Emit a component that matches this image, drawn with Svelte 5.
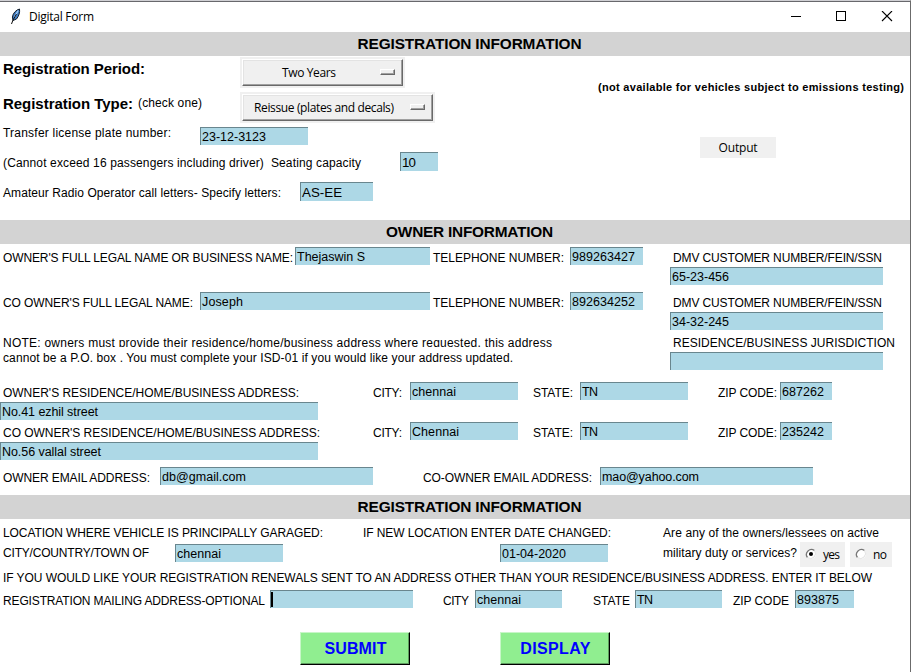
<script>
  // Spreads letters so that a text run occupies the given width in pixels,
  // leaving one pixel for the side bearing of the last letter.
  function track(node, width) {
    if (!width) return;
    const natural = node.getBoundingClientRect().width;
    const gaps = node.textContent.length - 1;
    node.style.letterSpacing = `${(width - 1 - natural) / gaps}px`;
  }
</script>

{#snippet label(text, width)}
  <div class="label"><span use:track={width}>{text}</span></div>
{/snippet}

{#snippet entry(text, width)}
  <div class="entry"><span use:track={width}>{text}</span></div>
{/snippet}

{#snippet banner(text, width)}
  <h2><span use:track={width}>{text}</span></h2>
{/snippet}

{#snippet radio(text, width, checked)}
  <div class="radio">
    <svg width="12" height="12" viewBox="0 0 12 12">
      <circle cx="6" cy="6" r="5" fill="#fff" />
      <path d="M2.5 9.5A5 5 0 0 1 9.5 2.5" fill="none" stroke="#777" stroke-width="1.3" />
      <path d="M9.5 2.5A5 5 0 0 1 2.5 9.5" fill="none" stroke="#e3e3e3" stroke-width="1" />
      {#if checked}<circle cx="6" cy="6" r="2" fill="#000" />{/if}
    </svg>
    <span use:track={width}>{text}</span>
  </div>
{/snippet}

<div class="window">
  <header>
    <svg class="feather" width="12" height="17" viewBox="0 0 12 17">
      <path d="M9.5 1C6 2 3 5 2.4 9L3 12.5L6.5 11C9 8 10 4 9.5 1Z" fill="#3f7cc4" stroke="#14202e" stroke-width="1" />
      <path d="M8.2 2.5L4.5 9" stroke="#a9d0f4" stroke-width="1.2" />
      <path d="M6.5 6L3 12L1.5 16" fill="none" stroke="#111" stroke-width="1" />
    </svg>
    <span class="title"><span use:track={66}>Digital Form</span></span>
    <svg class="controls" width="104" height="12" viewBox="0 0 104 12" fill="none" stroke="#000">
      <path d="M0 5.5H10" />
      <rect x="45.5" y="0.5" width="9" height="9" />
      <path d="M91 0L101 10M101 0L91 10" stroke-width="1.1" />
    </svg>
  </header>

  {@render banner('REGISTRATION INFORMATION', 225)}
  <section class="vehicle">
    <div class="vehicle-main">
      <div class="row period">
        <div class="strong"><span use:track={143}>Registration Period:</span></div>
        <div class="menu short"><div class="face"><span use:track={55}>Two Years</span><i></i></div></div>
      </div>
      <div class="row type">
        <div class="strong"><span use:track={131}>Registration Type:</span></div>
        {@render label('(check one)', 65)}
        <div class="menu long"><div class="face"><span use:track={141}>Reissue (plates and decals)</span><i></i></div></div>
      </div>
      <div class="row plate">
        {@render label('Transfer license plate number:', 169)}
        {@render entry('23-12-3123', 65)}
      </div>
      <div class="row seats">
        {@render label('(Cannot exceed 16 passengers including driver)\u00a0 Seating capacity', 359)}
        {@render entry('10', 15)}
      </div>
      <div class="row radio-op">
        {@render label('Amateur Radio Operator call letters- Specify letters:', 279)}
        {@render entry('AS-EE', 41)}
      </div>
    </div>
    <div class="vehicle-side">
      <p><span use:track={307}>(not available for vehicles subject to emissions testing)</span></p>
      <div class="output"><span use:track={40}>Output</span></div>
    </div>
  </section>

  {@render banner('OWNER INFORMATION', 168)}
  <section class="owners">
    <div class="owners-main">
      <div class="row owner">
        {@render label("OWNER'S FULL LEGAL NAME OR BUSINESS NAME:", 291)}
        {@render entry('Thejaswin S', 69)}
        {@render label('TELEPHONE NUMBER:', 132)}
        {@render entry('989263427', 64)}
      </div>
      <div class="row co-owner">
        {@render label("CO OWNER'S FULL LEGAL NAME:", 191)}
        {@render entry('Joseph', 42)}
        {@render label('TELEPHONE NUMBER:', 132)}
        {@render entry('892634252', 64)}
      </div>
      <div class="note">{@render label('NOTE: owners must provide their residence/home/business address where requested, this address', 550)}</div>
      <div class="note over">{@render label('cannot be a P.O. box . You must complete your ISD-01 if you would like your address updated.', 511)}</div>
    </div>
    <div class="owners-side">
      {@render label('DMV CUSTOMER NUMBER/FEIN/SSN', 210)}
      {@render entry('65-23-456', 58)}
      {@render label('DMV CUSTOMER NUMBER/FEIN/SSN', 210)}
      {@render entry('34-32-245', 58)}
      {@render label('RESIDENCE/BUSINESS JURISDICTION', 223)}
      {@render entry('', 0)}
    </div>
  </section>
  <section class="addresses">
    <div class="row address">
      {@render label("OWNER'S RESIDENCE/HOME/BUSINESS ADDRESS:", 297)}
      {@render label('CITY:', 30)}
      {@render entry('chennai', 45)}
      {@render label('STATE:', 41)}
      {@render entry('TN', 17)}
      {@render label('ZIP CODE:', 60)}
      {@render entry('687262', 43)}
    </div>
    <div class="row street">{@render entry('No.41 ezhil street', 97)}</div>
    <div class="row address">
      {@render label("CO OWNER'S RESIDENCE/HOME/BUSINESS ADDRESS:", 318)}
      {@render label('CITY:', 30)}
      {@render entry('Chennai', 48)}
      {@render label('STATE:', 41)}
      {@render entry('TN', 17)}
      {@render label('ZIP CODE:', 60)}
      {@render entry('235242', 43)}
    </div>
    <div class="row street">{@render entry('No.56 vallal street', 100)}</div>
    <div class="row email">
      {@render label('OWNER EMAIL ADDRESS:', 148)}
      {@render entry('db@gmail.com', 85)}
      {@render label('CO-OWNER EMAIL ADDRESS:', 170)}
      {@render entry('mao@yahoo.com', 98)}
    </div>
  </section>

  {@render banner('REGISTRATION INFORMATION', 225)}
  <section class="garage">
    <div class="row location">
      {@render label('LOCATION WHERE VEHICLE IS PRINCIPALLY GARAGED:', 321)}
      {@render label('IF NEW LOCATION ENTER DATE CHANGED:', 249)}
      {@render label('Are any of the owners/lessees on active', 217)}
    </div>
    <div class="row town">
      {@render label('CITY/COUNTRY/TOWN OF', 147)}
      {@render entry('chennai', 45)}
      {@render entry('01-04-2020', 65)}
      {@render label('military duty or services?', 135)}
      {@render radio('yes', 18, true)}
      {@render radio('no', 15, false)}
    </div>
    <div class="row renewals">
      {@render label('IF YOU WOULD LIKE YOUR REGISTRATION RENEWALS SENT TO AN ADDRESS OTHER THAN YOUR RESIDENCE/BUSINESS ADDRESS. ENTER IT BELOW', 870)}
    </div>
    <div class="row mailing">
      {@render label('REGISTRATION MAILING ADDRESS-OPTIONAL', 263)}
      <div class="entry"><b class="caret"></b></div>
      {@render label('CITY', 27)}
      {@render entry('chennai', 45)}
      {@render label('STATE', 38)}
      {@render entry('TN', 17)}
      {@render label('ZIP CODE', 57)}
      {@render entry('893875', 43)}
    </div>
    <div class="actions">
      <div class="push"><span use:track={63}>SUBMIT</span></div>
      <div class="push"><span use:track={71}>DISPLAY</span></div>
    </div>
  </section>
</div>

<style>
  :global(body) { margin: 0; background: #fff; }
  .window {
    box-sizing: border-box;
    width: 911px;
    height: 672px;
    overflow: hidden;
    background: #fff;
    border-top: 1px solid #d0d0d4;
    border-right: 1px solid #6b6b6b;
    font: 12px/22px "Liberation Sans", Arial, sans-serif;
    color: #000;
  }
  span { white-space: pre; }
  header {
    box-sizing: border-box;
    height: 31px;
    border-top: 1px solid #68686c;
    display: flex;
    align-items: flex-start;
    font-family: "Open Sans", "Noto Sans", sans-serif;
  }
  .feather { margin: 6px 0 0 10px; }
  .title { margin: 4px 0 0 7px; width: 762px; }
  .controls { margin-top: 9px; }
  h2 {
    margin: 0;
    height: 24px;
    padding-left: 29px;
    background: #d3d3d3;
    text-align: center;
    font-size: 15.4px;
    line-height: 24px;
    font-weight: bold;
  }
  .row { display: grid; align-items: start; }
  .label { height: 18px; padding-left: 3px; line-height: 22px; }
  .entry {
    box-sizing: border-box;
    height: 18px;
    padding-left: 1px;
    border-top: 1px solid #69868e;
    border-left: 1px solid #69868e;
    background: #add8e6;
    font-size: 12.5px;
    line-height: 18px;
  }
  .strong { padding-left: 3px; font-size: 15px; font-weight: bold; line-height: 24px; }

  .vehicle { display: flex; height: 164px; }
  .vehicle-main { width: 598px; }
  .period { height: 36px; grid-template-columns: 240px 165px; }
  .period .strong { margin-top: 1px; }
  .type { height: 35px; grid-template-columns: 135px 105px 195px; }
  .plate { height: 25px; grid-template-columns: 200px 108px; }
  .plate .label { margin-top: -5px; }
  .seats { height: 30px; grid-template-columns: 400px 38px; }
  .radio-op { height: 38px; grid-template-columns: 300px 73px; }
  .seats .entry, .radio-op .entry { height: 19px; font-size: 13.3px; line-height: 19px; }
  .menu { padding: 2px; height: 27px; background: #f0f0f0; font: 12px/23px "Open Sans", "Noto Sans", sans-serif; }
  .period .menu { margin-top: 1px; }
  .face {
    box-sizing: border-box;
    height: 27px;
    display: flex;
    align-items: center;
    justify-content: space-between;
    border: 1px solid;
    border-color: #fff #696969 #696969 #fff;
    box-shadow: inset -1px -1px #a0a0a0, inset 1px 1px #e3e3e3;
  }
  .short .face { padding: 0 7px 0 39px; }
  .long .face { padding: 0 7px 0 11px; }
  .face i {
    box-sizing: border-box;
    width: 15px;
    height: 6px;
    margin-bottom: 1px;
    border: 1px solid;
    border-color: #fff #696969 #696969 #fff;
    box-shadow: inset -1px -1px #a0a0a0;
  }
  .vehicle-side p { margin: 0; padding-top: 20px; font-size: 11px; font-weight: bold; line-height: 22px; }
  .output {
    width: 76px;
    height: 21px;
    margin: 39px 0 0 102px;
    background: #f0f0f0;
    text-align: center;
    font: 12px/21px "Open Sans", "Noto Sans", sans-serif;
  }

  .owners { display: flex; height: 135px; padding-top: 3px; }
  .owners-main { width: 670px; }
  .owner { height: 45px; grid-template-columns: 295px 135px 140px 73px; }
  .co-owner { height: 40px; grid-template-columns: 200px 230px 140px 73px; }
  .note { height: 15px; }
  .over { position: relative; background: #fff; }
  .owners-side { width: 213px; }
  .owners-side .label { height: 20px; }
  .owners-side .entry { margin-bottom: 7px; }
  .owners-side .entry:nth-of-type(4) { margin-bottom: 2px; }

  .addresses { height: 113px; }
  .address { height: 20px; grid-template-columns: 370px 40px 120px 50px 135px 65px 52px; }
  .address .entry:nth-child(3), .address .entry:nth-child(5) { width: 108px; }
  .street { height: 20px; grid-template-columns: 318px; }
  .email { height: 28px; padding-top: 5px; grid-template-columns: 160px 260px 180px 213px; }
  .email .entry { width: 213px; }

  .garage { padding-top: 3px; }
  .location { height: 22px; grid-template-columns: 360px 300px 240px; }
  .town { height: 23px; grid-template-columns: 175px 325px 160px 140px 50px 42px; }
  .town .label { line-height: 18px; }
  .town .entry { width: 108px; }
  .radio {
    width: 42px;
    height: 25px;
    margin-top: -2px;
    display: flex;
    align-items: flex-start;
    background: #f0f0f0;
    font: 12px/26px "Open Sans", "Noto Sans", sans-serif;
  }
  .radio:nth-child(5) { width: 45px; }
  .radio svg { margin: 6px 6px 0 5px; }
  .renewals { height: 23px; }
  .mailing { height: 42px; grid-template-columns: 270px 170px 35px 115px 45px 95px 65px 59px; }
  .mailing .entry:nth-child(2) { width: 143px; padding-left: 0; }
  .mailing .entry:nth-child(4), .mailing .entry:nth-child(6) { width: 87px; }
  .caret { display: block; width: 2px; height: 15px; margin-top: 1px; background: #000; }
  .actions { display: flex; gap: 90px; padding-left: 300px; }
  .push {
    box-sizing: border-box;
    width: 110px;
    height: 33px;
    border: 1px solid;
    border-color: #c8f6c8 #000 #000 #c8f6c8;
    box-shadow: inset -1px -1px #5e9b5e;
    background: #90ee90;
    color: #00f;
    text-align: center;
    font-size: 16px;
    font-weight: bold;
    line-height: 31px;
    padding-left: 1px;
  }
</style>
